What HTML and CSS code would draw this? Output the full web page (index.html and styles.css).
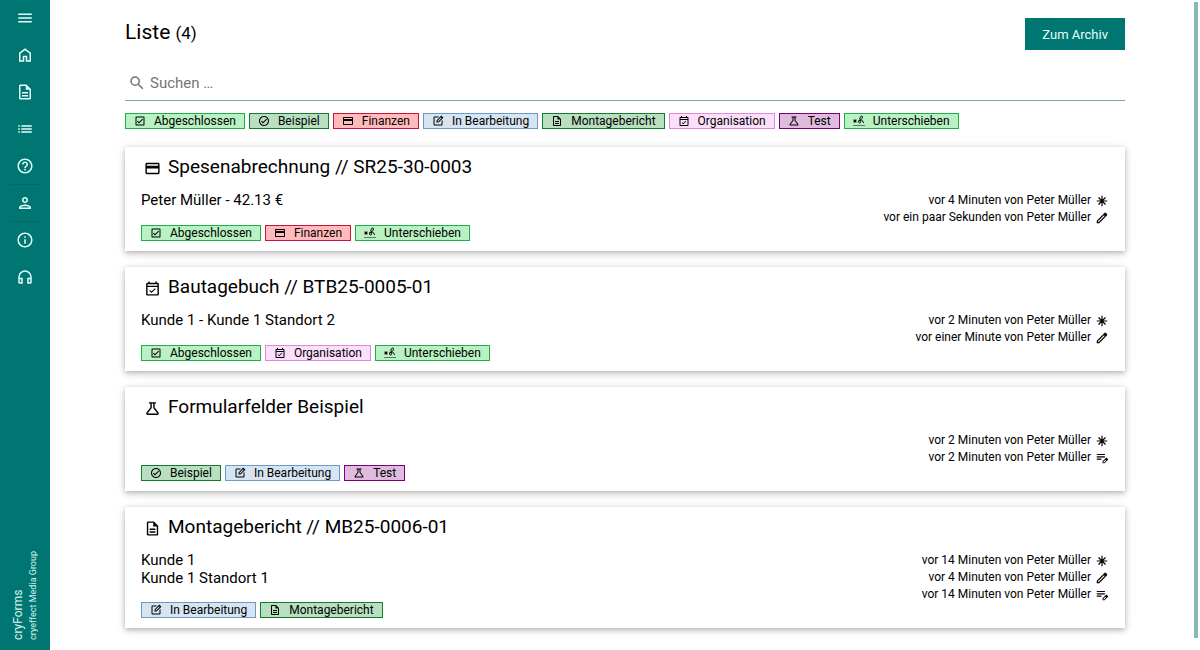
FILE: index.html
```
<!DOCTYPE html>
<html lang="de">
<head>
<meta charset="utf-8">
<meta name="viewport" content="width=device-width, initial-scale=1">
<title>cryForms</title>
<link rel="stylesheet" href="styles.css">
</head>
<body>
<svg class="sprite" aria-hidden="true">
  <symbol id="menu" viewBox="0 0 24 24"><path d="M3 18h18v-2H3zm0-5h18v-2H3zm0-7v2h18V6z"/></symbol>
  <symbol id="home" viewBox="0 0 24 24"><path d="M6 19h3v-6h6v6h3v-9l-6-4.500L6 10zm-2 2V9l8-6 8 6v12h-7v-6h-2v6z"/></symbol>
  <symbol id="doc" viewBox="0 0 24 24"><path d="M8 16h8v2H8zm0-4h8v2H8zm6-10H6c-1.100 0-2 .9-2 2v16c0 1.100.9 2 2 2h12c1.100 0 2-.9 2-2V8zm4 18H6V4h7v5h5z"/></symbol>
  <symbol id="list" viewBox="0 0 24 24"><path d="M3 7h2v2H3zm0 4h2v2H3zm0 4h2v2H3zM7 7h14v2H7zm0 4h14v2H7zm0 4h14v2H7z"/></symbol>
  <symbol id="help" viewBox="0 0 24 24"><path d="M11 18h2v-2h-2zm1-16C6.480 2 2 6.480 2 12s4.480 10 10 10 10-4.480 10-10S17.520 2 12 2m0 18c-4.410 0-8-3.590-8-8s3.590-8 8-8 8 3.590 8 8-3.590 8-8 8m0-14c-2.210 0-4 1.790-4 4h2c0-1.100.9-2 2-2s2 .9 2 2c0 2-3 1.750-3 5h2c0-2.250 3-2.500 3-5 0-2.210-1.790-4-4-4"/></symbol>
  <symbol id="person" viewBox="0 0 24 24"><path d="M12 6c1.100 0 2 .9 2 2s-.9 2-2 2-2-.9-2-2 .9-2 2-2m0 10c2.700 0 5.800 1.290 6 2H6c.23-.72 3.310-2 6-2m0-12C9.790 4 8 5.790 8 8s1.790 4 4 4 4-1.790 4-4-1.790-4-4-4m0 10c-2.670 0-8 1.340-8 4v2h16v-2c0-2.660-5.330-4-8-4"/></symbol>
  <symbol id="info" viewBox="0 0 24 24"><path d="M11 7h2v2h-2zm0 4h2v6h-2zm1-9C6.480 2 2 6.480 2 12s4.480 10 10 10 10-4.480 10-10S17.520 2 12 2m0 18c-4.410 0-8-3.590-8-8s3.590-8 8-8 8 3.590 8 8-3.590 8-8 8"/></symbol>
  <symbol id="headset" viewBox="0 0 24 24"><path d="M12 3a9 9 0 0 0-9 9v7c0 1.100.9 2 2 2h4v-8H5v-1a7 7 0 0 1 14 0v1h-4v8h4c1.100 0 2-.9 2-2v-7a9 9 0 0 0-9-9M7 15v4H5v-4zm12 4h-2v-4h2z"/></symbol>
  <symbol id="search" viewBox="0 0 24 24"><path d="M15.500 14h-.79l-.28-.27A6.470 6.470 0 0 0 16 9.500 6.500 6.500 0 1 0 9.500 16c1.610 0 3.090-.59 4.230-1.570l.27.28v.79l5 4.990L20.490 19zm-6 0C7.010 14 5 11.990 5 9.500S7.010 5 9.500 5 14 7.010 14 9.500 11.990 14 9.500 14"/></symbol>
  <symbol id="done" viewBox="0 0 24 24"><path d="M19 3H5a2 2 0 0 0-2 2v14c0 1.100.9 2 2 2h14a2 2 0 0 0 2-2V5a2 2 0 0 0-2-2m0 16H5V5h14zM18 9l-1.410-1.420L10 14.170l-2.590-2.580L6 13l4 4z"/></symbol>
  <symbol id="circle" viewBox="0 0 24 24"><path d="M12 2C6.480 2 2 6.480 2 12s4.480 10 10 10 10-4.480 10-10S17.520 2 12 2m0 18c-4.410 0-8-3.590-8-8s3.590-8 8-8 8 3.590 8 8-3.590 8-8 8m4.590-12.420L10 14.170l-2.590-2.580L6 13l4 4 8-8z"/></symbol>
  <symbol id="card" viewBox="0 0 24 24"><path d="M20 4H4c-1.110 0-2 .89-2 2v12c0 1.110.89 2 2 2h16c1.110 0 2-.89 2-2V6c0-1.110-.89-2-2-2m0 14H4v-6h16zm0-10H4V6h16z"/></symbol>
  <symbol id="edit" viewBox="0 0 24 24"><path d="M5 21a2 2 0 0 1-2-2V5a2 2 0 0 1 2-2h9l-2 2H5v14h14v-7l2-2v9a2 2 0 0 1-2 2zM9 15v-4.200L18.600 1.200 22.800 5.400 13.200 15zm2-2h1.400l7-7-1.400-1.400-7 7z"/></symbol>
  <symbol id="event" viewBox="0 0 24 24"><path d="M19 4h-1V2h-2v2H8V2H6v2H5a2 2 0 0 0-2 2v14c0 1.100.9 2 2 2h14a2 2 0 0 0 2-2V6a2 2 0 0 0-2-2m0 16H5V10h14zM5 8V6h14v2zm5.560 10.500 5.940-5.940-1.060-1.060-4.880 4.880-2.110-2.110-1.060 1.060z"/></symbol>
  <symbol id="flask" viewBox="0 0 24 24"><path d="M5 21c-1.700 0-2.600-1.900-1.500-3.200L9 10.500V5H7V3h10v2h-2v5.500l5.500 7.300C21.600 19.100 20.700 21 19 21zm0-2h14l-6-7.800V5h-2v6.200z"/></symbol>
  <symbol id="sign" viewBox="0 0 24 24"><path d="M1 9h2l1 1 1-1h2v2l-1 1 1 1v2H5l-1-1-1 1H1v-2l1-1-1-1zM1 20h2v2H1zm4 0h2v2H5zm4 0h2v2H9zm4 0h2v2h-2zm4 0h2v2h-2zm4 0h2v2h-2z"/><path fill="none" stroke="currentColor" stroke-width="2" d="M10 12c3 0 10-5 9-9-2-3-6 1-5 6 1 3 2 4 1 6s-4 1-4-1 3-4 6-4 1 5 5 5"/></symbol>
  <symbol id="star" viewBox="0 0 24 24"><path fill="none" stroke="currentColor" stroke-width="2" d="M12 3v18M3 12h18M6 6l12 12M18 6L6 18"/></symbol>
  <symbol id="pen" viewBox="0 0 24 24"><path d="M3 21v-4.250L16.200 3.600c.8-.8 2-.8 2.800 0L20.400 5c.8.8.8 2 0 2.800L7.250 21zm2-2h1.400L16.700 8.700l-1.400-1.400L5 17.600z"/></symbol>
  <symbol id="note" viewBox="0 0 24 24"><path d="M3 5h14v2H3zm0 4h14v2H3zm0 4h8v2H3zm10 8v-3.300l6.500-6.500 3.300 3.300-6.500 6.500zm1.500-1.500h1.200l3.300-3.300-1.200-1.200-3.300 3.300z"/></symbol>
</svg>

<aside class="sidebar">
  <nav class="menu" aria-label="Hauptmenü">
    <div class="menu-group">
      <button class="menu-item" type="button" aria-label="Menü"><svg class="icon"><use href="#menu"/></svg></button>
      <a class="menu-item" href="#" aria-label="Start"><svg class="icon"><use href="#home"/></svg></a>
      <a class="menu-item" href="#" aria-label="Formulare"><svg class="icon"><use href="#doc"/></svg></a>
      <a class="menu-item" href="#" aria-label="Liste"><svg class="icon"><use href="#list"/></svg></a>
      <a class="menu-item" href="#" aria-label="Hilfe"><svg class="icon"><use href="#help"/></svg></a>
    </div>
    <div class="menu-group">
      <a class="menu-item" href="#" aria-label="Profil"><svg class="icon"><use href="#person"/></svg></a>
    </div>
    <div class="menu-group">
      <a class="menu-item" href="#" aria-label="Info"><svg class="icon"><use href="#info"/></svg></a>
      <a class="menu-item" href="#" aria-label="Support"><svg class="icon"><use href="#headset"/></svg></a>
    </div>
  </nav>
  <div class="brand">
    <span class="brand-name">cryForms</span>
    <span class="brand-owner">cryeffect Media Group</span>
  </div>
</aside>

<main class="page">
  <header class="page-head">
    <h1 class="page-title">Liste <span class="count">(4)</span></h1>
    <button class="archive" type="button">Zum Archiv</button>
  </header>
  <label class="search">
    <svg class="icon"><use href="#search"/></svg>
    <input class="search-input" type="text" placeholder="Suchen …" aria-label="Suchen">
  </label>
  <div class="tags">
    <button type="button" class="tag green"><svg class="tag-icon"><use href="#done"/></svg>Abgeschlossen</button>
    <button type="button" class="tag forest"><svg class="tag-icon"><use href="#circle"/></svg>Beispiel</button>
    <button type="button" class="tag red"><svg class="tag-icon"><use href="#card"/></svg>Finanzen</button>
    <button type="button" class="tag blue"><svg class="tag-icon"><use href="#edit"/></svg>In Bearbeitung</button>
    <button type="button" class="tag forest"><svg class="tag-icon"><use href="#doc"/></svg>Montagebericht</button>
    <button type="button" class="tag pink"><svg class="tag-icon"><use href="#event"/></svg>Organisation</button>
    <button type="button" class="tag purple"><svg class="tag-icon"><use href="#flask"/></svg>Test</button>
    <button type="button" class="tag green"><svg class="tag-icon"><use href="#sign"/></svg>Unterschieben</button>
  </div>

  <div class="cards">
    <article class="card">
      <h2 class="card-title"><svg class="title-icon"><use href="#card"/></svg>Spesenabrechnung // SR25-30-0003</h2>
      <div class="card-body">
        <div class="details">Peter Müller - 42.13 €</div>
        <ul class="history">
          <li class="entry">vor 4 Minuten von Peter Müller<svg class="entry-icon"><use href="#star"/></svg></li>
          <li class="entry">vor ein paar Sekunden von Peter Müller<svg class="entry-icon"><use href="#pen"/></svg></li>
        </ul>
      </div>
      <div class="tags">
        <span class="tag green"><svg class="tag-icon"><use href="#done"/></svg>Abgeschlossen</span>
        <span class="tag red"><svg class="tag-icon"><use href="#card"/></svg>Finanzen</span>
        <span class="tag green"><svg class="tag-icon"><use href="#sign"/></svg>Unterschieben</span>
      </div>
    </article>
    <article class="card">
      <h2 class="card-title"><svg class="title-icon"><use href="#event"/></svg>Bautagebuch // BTB25-0005-01</h2>
      <div class="card-body">
        <div class="details">Kunde 1 - Kunde 1 Standort 2</div>
        <ul class="history">
          <li class="entry">vor 2 Minuten von Peter Müller<svg class="entry-icon"><use href="#star"/></svg></li>
          <li class="entry">vor einer Minute von Peter Müller<svg class="entry-icon"><use href="#pen"/></svg></li>
        </ul>
      </div>
      <div class="tags">
        <span class="tag green"><svg class="tag-icon"><use href="#done"/></svg>Abgeschlossen</span>
        <span class="tag pink"><svg class="tag-icon"><use href="#event"/></svg>Organisation</span>
        <span class="tag green"><svg class="tag-icon"><use href="#sign"/></svg>Unterschieben</span>
      </div>
    </article>
    <article class="card">
      <h2 class="card-title"><svg class="title-icon"><use href="#flask"/></svg>Formularfelder Beispiel</h2>
      <div class="card-body">
        <div class="details"></div>
        <ul class="history">
          <li class="entry">vor 2 Minuten von Peter Müller<svg class="entry-icon"><use href="#star"/></svg></li>
          <li class="entry">vor 2 Minuten von Peter Müller<svg class="entry-icon"><use href="#note"/></svg></li>
        </ul>
      </div>
      <div class="tags">
        <span class="tag forest"><svg class="tag-icon"><use href="#circle"/></svg>Beispiel</span>
        <span class="tag blue"><svg class="tag-icon"><use href="#edit"/></svg>In Bearbeitung</span>
        <span class="tag purple"><svg class="tag-icon"><use href="#flask"/></svg>Test</span>
      </div>
    </article>
    <article class="card">
      <h2 class="card-title"><svg class="title-icon"><use href="#doc"/></svg>Montagebericht // MB25-0006-01</h2>
      <div class="card-body">
        <div class="details">Kunde 1<br>Kunde 1 Standort 1</div>
        <ul class="history">
          <li class="entry">vor 14 Minuten von Peter Müller<svg class="entry-icon"><use href="#star"/></svg></li>
          <li class="entry">vor 4 Minuten von Peter Müller<svg class="entry-icon"><use href="#pen"/></svg></li>
          <li class="entry">vor 14 Minuten von Peter Müller<svg class="entry-icon"><use href="#note"/></svg></li>
        </ul>
      </div>
      <div class="tags">
        <span class="tag blue"><svg class="tag-icon"><use href="#edit"/></svg>In Bearbeitung</span>
        <span class="tag forest"><svg class="tag-icon"><use href="#doc"/></svg>Montagebericht</span>
      </div>
    </article>
  </div>
</main>
<div class="scroll-thumb"></div>
</body>
</html>
```
FILE: styles.css
```
* { box-sizing: border-box; }
body {
  margin: 0;
  min-height: 100vh;
  display: flex;
  background: #fff;
  color: #000;
  font-family: Roboto, sans-serif;
  font-size: 15px;
}
button, input { font-family: inherit; }
svg { fill: currentColor; flex: none; }
.sprite { display: none; }
.icon { width: 18px; height: 18px; }

.sidebar {
  position: sticky;
  top: 0;
  height: 100vh;
  width: 50px;
  flex: none;
  display: flex;
  flex-direction: column;
  justify-content: space-between;
  padding: 0 10px 10px;
  background: #007672;
  color: #e4fffb;
}
.menu-group { display: grid; gap: 1px; }
.menu-group + .menu-group { border-top: 1px solid #006a66; }
.menu-item {
  height: 36px;
  display: flex;
  align-items: center;
  justify-content: center;
  padding: 0;
  border: 0;
  background: none;
  color: inherit;
}
.brand {
  writing-mode: vertical-rl;
  transform: rotate(180deg);
  display: flex;
  flex-direction: column;
  color: #d5f2ee;
}
.brand-name { font-size: 12px; line-height: 16px; }
.brand-owner { font-size: 9px; line-height: 14px; }

.page {
  flex: 1;
  min-width: 0;
  max-width: 1040px;
  margin: 0 auto;
  padding: 18px 20px 22px;
}
.page-head { display: flex; justify-content: space-between; }
.page-title { margin: 0; font-size: 21px; font-weight: 400; line-height: 28px; }
.count { font-size: 17px; }
.archive {
  height: 32px;
  padding: 0 17px;
  border: 0;
  background: #007672;
  color: #e4fffb;
  font-size: 13px;
}
.search {
  display: flex;
  align-items: center;
  gap: 4px;
  height: 35px;
  margin: 16px 0 12px;
  padding-left: 3px;
  border-bottom: 1px solid #76a9b1;
  color: #757575;
}
.search-input {
  flex: 1;
  padding: 0;
  border: 0;
  outline: 0;
  background: none;
  color: #000;
  font-size: 15px;
}
.search-input::placeholder { color: #757575; }

.tags { display: flex; flex-wrap: wrap; gap: 4px; }
.tag {
  display: flex;
  align-items: center;
  gap: 8px;
  height: 16px;
  padding: 0 8px;
  border: 1px solid;
  color: #000;
  font-size: 12px;
  line-height: 14px;
}
.tag-icon { width: 12px; height: 12px; }
.green { background: #baf1c3; border-color: #1eae4c; }
.forest { background: #badfc0; border-color: #0d7d30; }
.red { background: #ffbbbc; border-color: #c8143c; }
.blue { background: #d7e5f2; border-color: #6c9ac2; }
.pink { background: #fbdffb; border-color: #dd8bd9; }
.purple { background: #dfbbdd; border-color: #7c007c; }

.cards { display: grid; gap: 16px; margin-top: 18px; }
.card {
  padding: 8px 16px 10px;
  background: #fff;
  box-shadow: 0 2px 6px rgba(0, 0, 0, .3), 0 0 16px rgba(0, 0, 0, .04);
}
.card-title {
  display: flex;
  align-items: center;
  gap: 7px;
  margin: 0 0 13px;
  padding-left: 3px;
  font-size: 19px;
  font-weight: 400;
  line-height: 24px;
}
.title-icon { width: 17px; height: 17px; margin-top: 3px; }
.card-body { display: flex; justify-content: space-between; }
.details { line-height: 18px; margin-top: -1px; }
.history {
  display: grid;
  gap: 1px;
  margin: 0;
  padding: 0;
  list-style: none;
  font-size: 12px;
  line-height: 16px;
}
.entry { display: flex; justify-content: flex-end; align-items: flex-end; gap: 4px; }
.entry-icon { width: 14px; height: 14px; }

.scroll-thumb {
  position: fixed;
  top: 2px;
  right: 2px;
  bottom: 12px;
  width: 4px;
  background: #86bab8;
}
```
